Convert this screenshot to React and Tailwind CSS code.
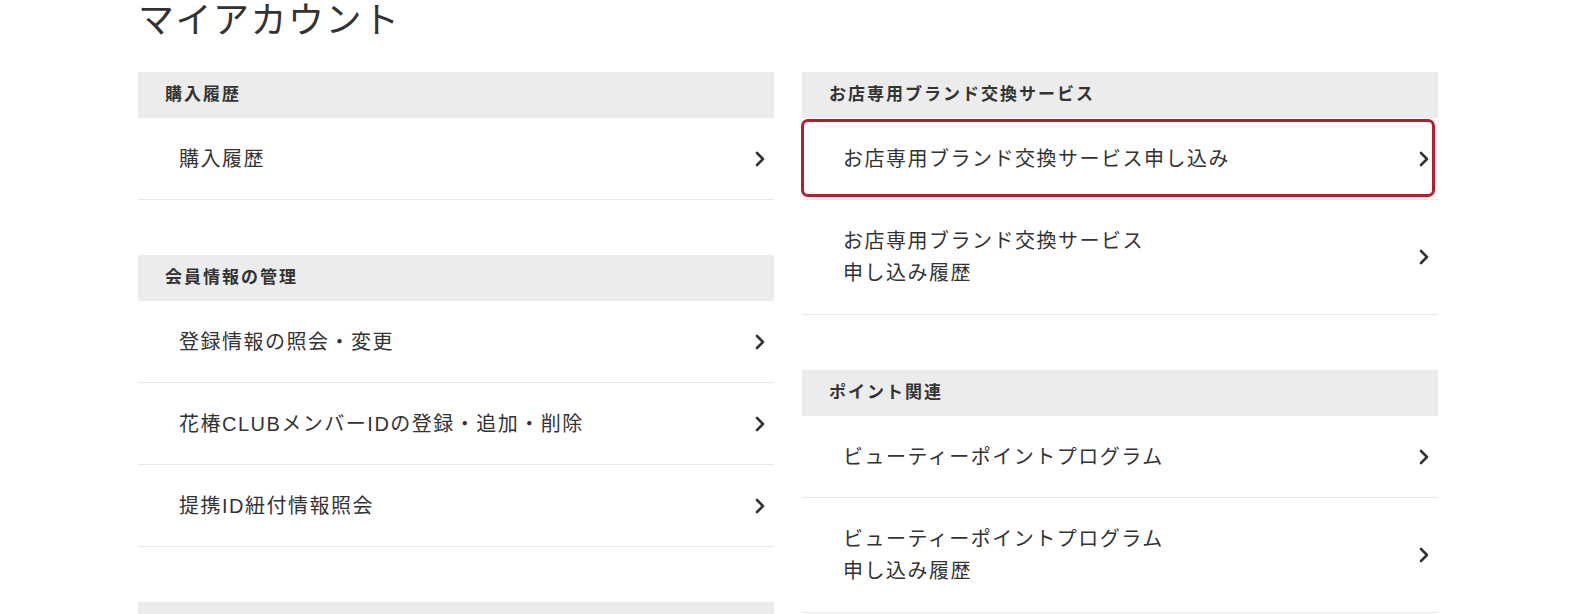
import React from "react";

const FONT = {
  fontFamily:
    '"Liberation Sans", "Noto Sans CJK JP", "Noto Sans", sans-serif',
};

function Chevron() {
  return (
    <svg width="10" height="16" viewBox="0 0 10 16" className="shrink-0">
      <path
        d="M2 2 L8 8 L2 14"
        fill="none"
        stroke="#333"
        strokeWidth="2.6"
        strokeLinecap="round"
        strokeLinejoin="round"
      />
    </svg>
  );
}

function Header({ children }) {
  return (
    <div className="h-[46px] bg-[#ececec] flex items-center pl-[27px] text-[17px] font-bold tracking-[2px] text-[#333]">
      {children}
    </div>
  );
}

function Item({ lines, highlight }) {
  const two = lines.length > 1;
  return (
    <div
      className={
        "relative flex items-center justify-between border-b border-[#e9e9e9] pl-[41px] pr-[9px] " +
        (two ? "py-[25px]" : "h-[82px]")
      }
    >
      <div className="text-[20px] tracking-[1.5px] leading-[32px] text-[#333]">
        {lines.map((l, i) => (
          <div key={i}>{l}</div>
        ))}
      </div>
      <Chevron />
      {highlight && (
        <div className="absolute top-px left-[-1px] right-[3px] bottom-[2px] border-[3px] border-[#b71c2a] rounded-[7px] pointer-events-none" />
      )}
    </div>
  );
}

function Section({ title, items, last }) {
  return (
    <div className={last ? "" : "mb-[55px]"}>
      <Header>{title}</Header>
      {items.map((it, i) => (
        <Item key={i} lines={it.lines} highlight={it.highlight} />
      ))}
    </div>
  );
}

export default function App() {
  return (
    <div className="w-full h-[614px] overflow-hidden bg-white" style={FONT}>
      <div className="w-[1300px] mx-auto">
        <h1 className="h-[72px] pt-[1px] text-[36px] leading-[40px] text-[#333] font-normal tracking-[1.5px]">
          マイアカウント
        </h1>
        <div className="grid grid-cols-2 gap-x-[28px]">
          <div>
            <Section title="購入履歴" items={[{ lines: ["購入履歴"] }]} />
            <Section
              title="会員情報の管理"
              items={[
                { lines: ["登録情報の照会・変更"] },
                { lines: ["花椿CLUBメンバーIDの登録・追加・削除"] },
                { lines: ["提携ID紐付情報照会"] },
              ]}
            />
            <div className="h-[46px] bg-[#ececec]" />
          </div>
          <div>
            <Section
              title="お店専用ブランド交換サービス"
              items={[
                { lines: ["お店専用ブランド交換サービス申し込み"], highlight: true },
                { lines: ["お店専用ブランド交換サービス", "申し込み履歴"] },
              ]}
            />
            <Section
              title="ポイント関連"
              items={[
                { lines: ["ビューティーポイントプログラム"] },
                { lines: ["ビューティーポイントプログラム", "申し込み履歴"] },
              ]}
              last
            />
          </div>
        </div>
      </div>
    </div>
  );
}
